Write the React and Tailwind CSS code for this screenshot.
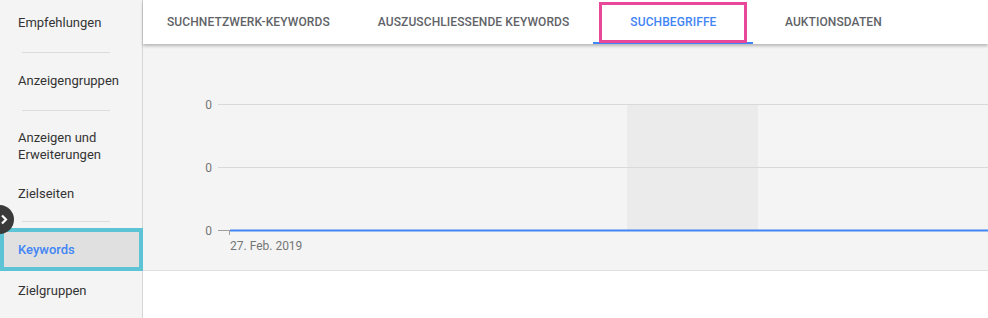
import React from "react";

const font = { fontFamily: "Roboto, 'Liberation Sans', sans-serif" };

function Sep() {
  return (
    <div className="h-[14px] flex items-center pl-[22px]">
      <div className="h-px w-[88px] bg-[#dcdcdc]" />
    </div>
  );
}

function Sidebar() {
  return (
    <div className="relative w-[143px] shrink-0 bg-[#f4f4f4] border-r border-[#d6d6d6] text-[13px] text-[#333]">
      <div className="h-[45px] flex items-center pl-[18px] pt-px">Empfehlungen</div>
      <Sep />
      <div className="h-[44px] flex items-center pl-[18px]">Anzeigengruppen</div>
      <Sep />
      <div className="h-[57px] flex items-center pl-[18px] leading-[17px]">
        Anzeigen und
        <br />
        Erweiterungen
      </div>
      <div className="h-[40px] flex items-center pl-[18px]">Zielseiten</div>
      <div className="h-[14px] pt-[7px] pl-[22px]">
        <div className="h-px w-[88px] bg-[#dcdcdc]" />
      </div>
      <div className="h-[43px] -mr-px border-[4px] border-[#5cc4d4] bg-[#e0e0e0] flex items-center pl-[14px] text-[#4285f4] font-medium">
        Keywords
      </div>
      <div className="h-[40px] flex items-center pl-[18px]">Zielgruppen</div>
      <div className="absolute left-[-15px] top-[205px] w-[29px] h-[29px] rounded-full bg-[#3a3a3a] flex items-center justify-end pr-[5px]">
        <svg width="9" height="11" viewBox="0 0 9 11">
          <path d="M2 1.5 L6 5.5 L2 9.5" fill="none" stroke="#fff" strokeWidth="2.2" />
        </svg>
      </div>
    </div>
  );
}

function Tab({ label, active }) {
  return (
    <div
      className={`relative h-[44px] min-w-[160px] flex items-center justify-center px-[24px] text-[12px] font-medium tracking-[0.1px] uppercase ${
        active ? "text-[#4285f4]" : "text-[#5f6368]"
      }`}
    >
      {label}
      {active && (
        <>
          <div className="absolute left-0 right-0 bottom-0 h-[2px] bg-[#4285f4]" />
          <div className="absolute left-[6px] right-[6px] top-[2px] bottom-[1px] border-[3px] border-[#e8489b]" />
        </>
      )}
    </div>
  );
}

function Chart() {
  const f = "Roboto, 'Liberation Sans', sans-serif";
  return (
    <svg width="845" height="226" viewBox="0 0 845 226" className="block">
      <rect x="484" y="60" width="131" height="126" fill="#ebebeb" />
      <line x1="75" y1="60.5" x2="845" y2="60.5" stroke="#d9d9d9" strokeWidth="1" />
      <line x1="75" y1="123.5" x2="845" y2="123.5" stroke="#d9d9d9" strokeWidth="1" />
      <line x1="75" y1="186.5" x2="87" y2="186.5" stroke="#9e9e9e" strokeWidth="1" />
      <line x1="86.5" y1="186" x2="86.5" y2="191" stroke="#9e9e9e" strokeWidth="1" />
      <line x1="87" y1="186.5" x2="845" y2="186.5" stroke="#4285f4" strokeWidth="2" />
      <g fontFamily={f} fontSize="12" fill="#757575">
        <text x="69" y="65" textAnchor="end">0</text>
        <text x="69" y="128" textAnchor="end">0</text>
        <text x="69" y="191" textAnchor="end">0</text>
        <text x="87" y="206">27. Feb. 2019</text>
      </g>
    </svg>
  );
}

export default function App() {
  return (
    <div className="w-[988px] h-[318px] overflow-hidden flex bg-white" style={font}>
      <Sidebar />
      <div className="flex-1 flex flex-col min-w-0">
        <div className="relative z-10 h-[44px] bg-white shadow-[0_2px_3px_rgba(0,0,0,0.25)] flex">
          <Tab label="Suchnetzwerk-Keywords" />
          <Tab label="Auszuschliessende Keywords" />
          <Tab label="Suchbegriffe" active />
          <Tab label="Auktionsdaten" />
        </div>
        <div className="h-[227px] bg-[#f4f4f4] border-b border-[#e0e0e0] overflow-hidden">
          <Chart />
        </div>
        <div className="flex-1 bg-white" />
      </div>
    </div>
  );
}
